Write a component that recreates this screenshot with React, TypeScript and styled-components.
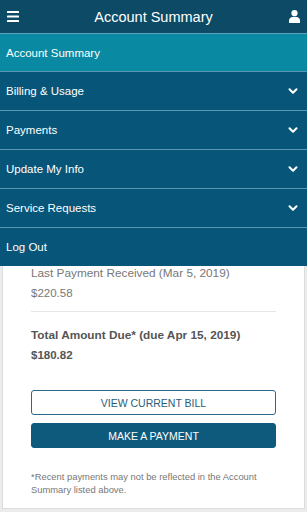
import React from "react";
import styled, { createGlobalStyle } from "styled-components";
import { ChevronDown } from "lucide-react";

const GlobalStyle = createGlobalStyle`
  html, body {
    margin: 0;
    padding: 0;
    background: #ececec;
    font-family: "Liberation Sans", Arial, sans-serif;
  }
`;

const Page = styled.div`
  position: relative;
  width: 307px;
  height: 512px;
  overflow: hidden;
  background: #ececec;
`;

const Header = styled.header`
  height: 33px;
  background: #0d4a66;
  display: flex;
  align-items: center;
  justify-content: space-between;
  padding: 0 6px;
  color: #fff;
  box-sizing: border-box;
`;

const Title = styled.h1`
  margin: 0;
  font-size: 14.5px;
  font-weight: normal;
  color: #fff;
`;

const IconBtn = styled.span`
  width: 14px;
  display: flex;
  align-items: center;
  justify-content: center;
`;

// the open menu lies over the top of the summary card
const Menu = styled.nav`
  position: absolute;
  top: 33px;
  left: 0;
  right: 0;
  display: flex;
  flex-direction: column;
  border-top: 1px solid #5fa2bf;
`;

const MenuItem = styled.div<{ $active?: boolean }>`
  height: ${(p) => (p.$active ? "37px" : "38px")};
  display: flex;
  align-items: center;
  justify-content: space-between;
  padding: 0 7px 0 6px;
  background: ${(p) => (p.$active ? "#0a8aa2" : "#075579")};
  border-bottom: 1px solid #5a97b4;
  color: #fff;
  font-size: 11.5px;

  &:last-child {
    border-bottom: none;
  }
`;

const Card = styled.main`
  margin: 0 2px;
  height: 476px;
  background: #fff;
  border: 1px solid #dcdcdc;
  border-top: none;
  padding: 233px 28px 0;
  box-sizing: border-box;
`;

const Label = styled.div<{ $bold?: boolean }>`
  font-size: 11.8px;
  font-weight: ${(p) => (p.$bold ? "bold" : "normal")};
  color: ${(p) => (p.$bold ? "#555" : "#777")};
  line-height: 14px;
`;

const Amount = styled.div<{ $bold?: boolean }>`
  margin-top: 6px;
  font-size: 11.5px;
  font-weight: ${(p) => (p.$bold ? "bold" : "normal")};
  color: ${(p) => (p.$bold ? "#555" : "#777")};
  line-height: 14px;
`;

const Rule = styled.hr`
  border: none;
  border-top: 1px solid #e6e6e6;
  margin: 11px 0 16px;
`;

const Buttons = styled.div`
  margin-top: 28px;
  display: flex;
  flex-direction: column;
  gap: 8px;
`;

const Button = styled.button<{ $filled?: boolean }>`
  height: 25px;
  border-radius: 3px;
  border: 1px solid ${(p) => (p.$filled ? "#0e5a7c" : "#2e6787")};
  background: ${(p) => (p.$filled ? "#0e5a7c" : "#fff")};
  color: ${(p) => (p.$filled ? "#fff" : "#2a5d7b")};
  font-family: "Liberation Sans", Arial, sans-serif;
  font-size: 10.5px;
  padding: 0;
  width: 100%;
`;

const Note = styled.p`
  margin: 22px 0 0;
  font-size: 9.4px;
  line-height: 13px;
  color: #777;
`;

const items = [
  { label: "Account Summary", active: true },
  { label: "Billing & Usage", chevron: true },
  { label: "Payments", chevron: true },
  { label: "Update My Info", chevron: true },
  { label: "Service Requests", chevron: true },
  { label: "Log Out" },
];

export default function App() {
  return (
    <Page>
      <GlobalStyle />
      <Header>
        <IconBtn>
          <svg width="12" height="11" viewBox="0 0 12 11">
            <rect x="0" y="0" width="12" height="2" rx="0.5" fill="#fff" />
            <rect x="0" y="4.5" width="12" height="2" rx="0.5" fill="#fff" />
            <rect x="0" y="9" width="12" height="2" rx="0.5" fill="#fff" />
          </svg>
        </IconBtn>
        <Title>Account Summary</Title>
        <IconBtn>
          <svg width="11" height="13" viewBox="0 0 11 13">
            <circle cx="5.5" cy="3.2" r="3.1" fill="#fff" />
            <path d="M0 13 V10.5 C0 8.2 1.8 7 3.5 7 H7.5 C9.2 7 11 8.2 11 10.5 V13 Z" fill="#fff" />
          </svg>
        </IconBtn>
      </Header>
      <Card>
        <Label>Last Payment Received (Mar 5, 2019)</Label>
        <Amount>$220.58</Amount>
        <Rule />
        <Label $bold>Total Amount Due* (due Apr 15, 2019)</Label>
        <Amount $bold>$180.82</Amount>
        <Buttons>
          <Button>VIEW CURRENT BILL</Button>
          <Button $filled>MAKE A PAYMENT</Button>
        </Buttons>
        <Note>
          *Recent payments may not be reflected in the Account Summary listed
          above.
        </Note>
      </Card>
      <Menu>
        {items.map((it) => (
          <MenuItem key={it.label} $active={it.active}>
            <span>{it.label}</span>
            {it.chevron && <ChevronDown size={14} strokeWidth={3.5} color="#fff" />}
          </MenuItem>
        ))}
      </Menu>
    </Page>
  );
}
